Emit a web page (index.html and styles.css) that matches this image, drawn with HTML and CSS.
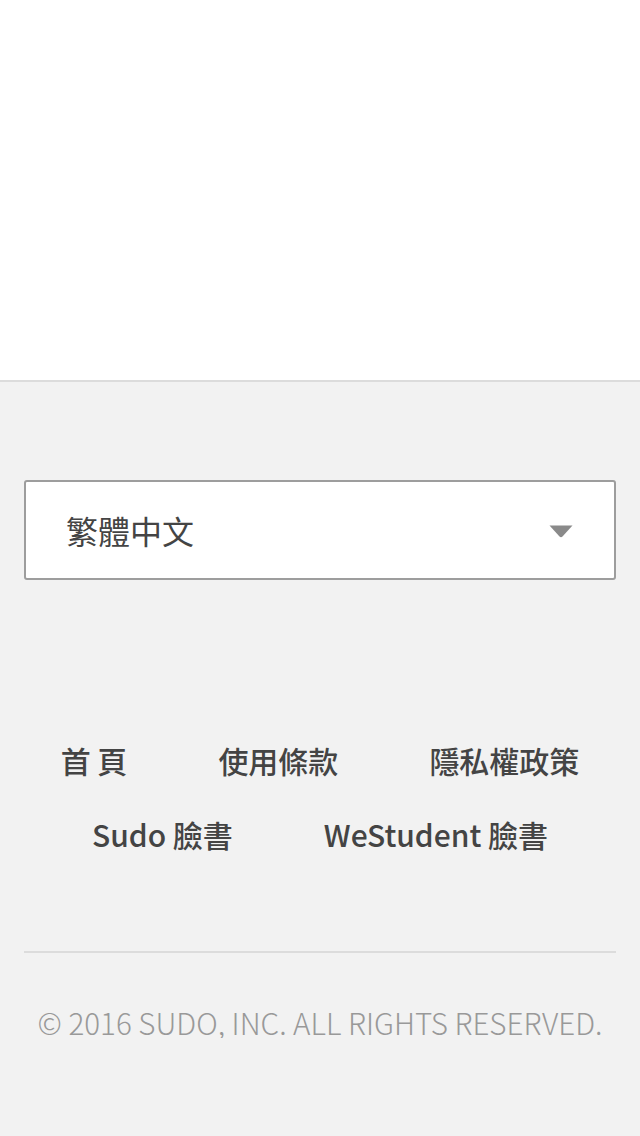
FILE: index.html
```html
<!DOCTYPE html>
<html lang="zh-Hant">
<head>
<meta charset="utf-8">
<title>Sudo</title>
<link rel="stylesheet" href="styles.css">
</head>
<body>
<div class="top"></div>
<footer class="footer">
  <div class="select">
    <span class="select-label">繁體中文</span>
    <svg class="select-arrow" width="24" height="13" viewBox="0 0 24 13"><path d="M0.5 0.5 H23.5 L13.5 11.5 Q12 13 10.5 11.5 Z" fill="#8a8a8a"/></svg>
  </div>
  <nav class="links">
    <a class="link" href="#">首 頁</a>
    <a class="link" href="#">使用條款</a>
    <a class="link" href="#">隱私權政策</a>
    <a class="link" href="#">Sudo 臉書</a>
    <a class="link" href="#">WeStudent 臉書</a>
  </nav>
  <hr class="divider">
  <p class="copyright">© 2016 SUDO, INC. ALL RIGHTS RESERVED.</p>
</footer>
</body>
</html>
```
FILE: styles.css
```css
html, body {
  margin: 0;
  padding: 0;
}
body {
  background: #f2f2f2;
  font-family: "Noto Sans CJK TC", "Noto Sans", sans-serif;
  color: #444;
}
.top {
  height: 380px;
  background: #fff;
  border-bottom: 2px solid #dcdcdc;
}
.footer {
  padding: 98px 24px 0;
  height: 656px;
  box-sizing: border-box;
}
.select {
  height: 100px;
  box-sizing: border-box;
  border: 2px solid #9d9d9d;
  border-radius: 3px;
  background: #fff;
  display: flex;
  align-items: center;
  justify-content: space-between;
  padding: 0 41px 0 40px;
}
.select-label {
  font-size: 32px;
  line-height: 44px;
  color: #444;
}
.select-arrow {
  display: block;
  margin-top: 2px;
}
.links {
  margin-top: 158px;
  display: flex;
  flex-wrap: wrap;
  justify-content: center;
  column-gap: 91px;
  row-gap: 30px;
}
.link {
  font-size: 30px;
  line-height: 44px;
  font-weight: 500;
  color: #444;
  text-decoration: none;
}
.divider {
  margin: 95px 0 0;
  border: 0;
  height: 2px;
  background: #dcdcdc;
}
.copyright {
  margin: 48px 0 0;
  text-align: center;
  font-size: 29.6px;
  line-height: 44px;
  font-weight: 300;
  color: #999;
}
```
